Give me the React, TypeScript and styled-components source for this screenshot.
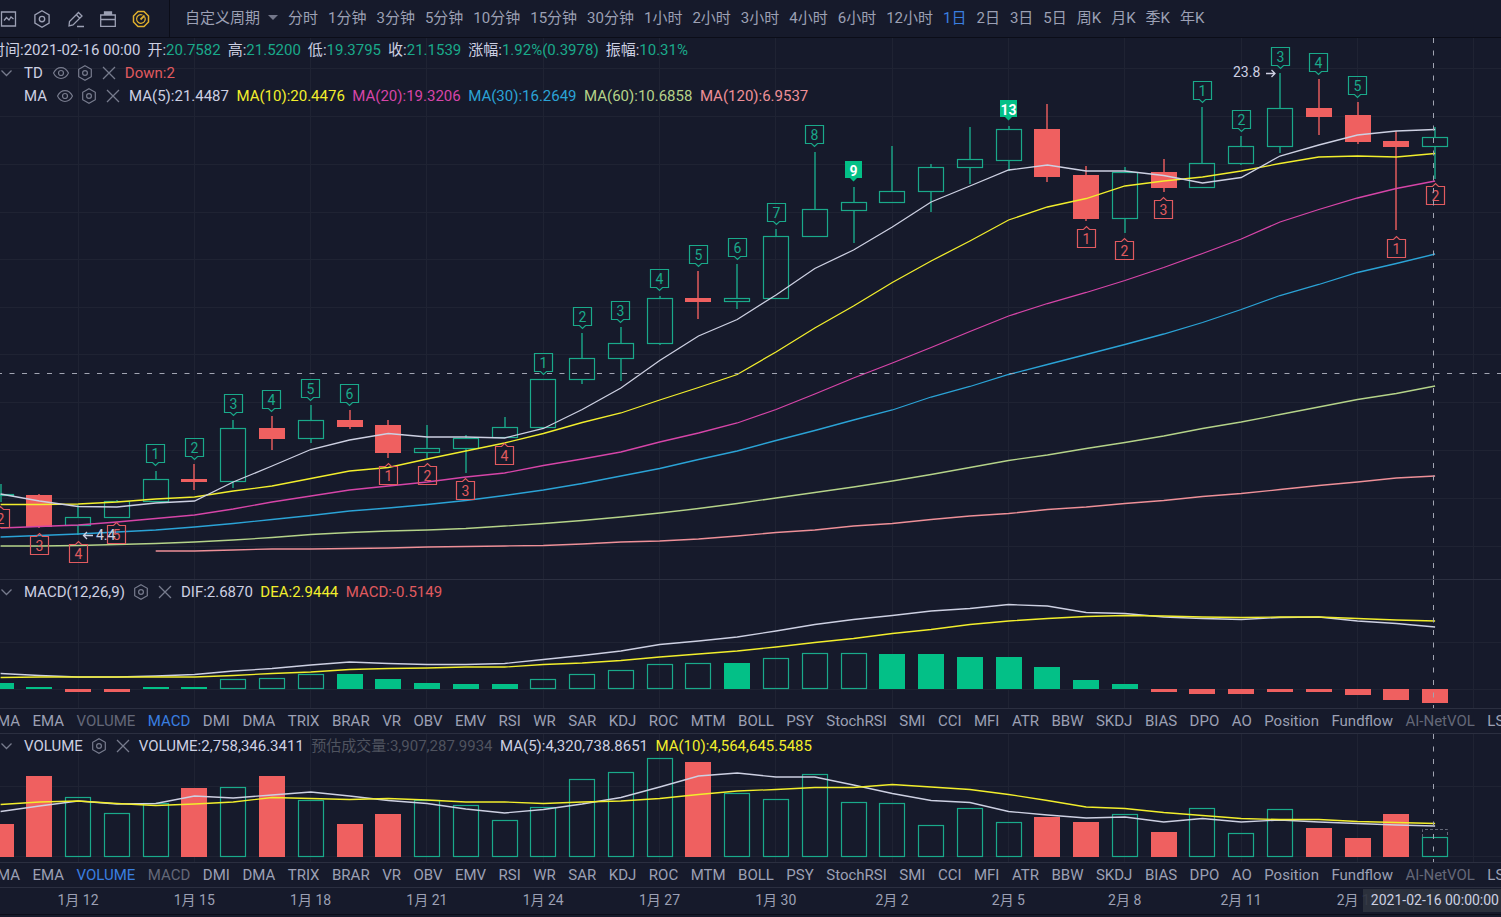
import React, { useState } from "react";
import styled, { createGlobalStyle } from "styled-components";

const color = {
  bg: "#161a2b",
  edge: "#0b0d18",
  line: "#2b2f40",
  grid: "#1f2333",
  text: "#cdd0e2",
  muted: "#9ca0b4",
  dim: "#646878",
  faint: "#4f535f",
  blue: "#3a7fe0",
  up: "#03c087",
  upLine: "#1aa98a",
  down: "#ef6060",
  downText: "#e05a5f",
  yellow: "#f2ee2c",
  magenta: "#d645a8",
  cyan: "#2ba3d6",
  lime: "#b5d389",
  pink: "#ee9098",
};

const font = `Roboto, "Noto Sans CJK SC", sans-serif`;

const GlobalStyle = createGlobalStyle`
  * { box-sizing: border-box; }
  body {
    margin: 0;
    background: ${color.bg};
    color: ${color.text};
    font-family: ${font};
    font-size: 15px;
    overflow-x: hidden;
  }
`;

const Page = styled.div`
  display: flex;
  flex-direction: column;
  min-height: 100vh;
  background: ${color.bg};
`;

const Toolbar = styled.header`
  display: flex;
  align-items: stretch;
  height: 38px;
  overflow: hidden;
  border-bottom: 1px solid ${color.edge};
`;

const ToolGroup = styled.div`
  display: flex;
  flex: none;
  align-items: center;
  gap: 15px;
  width: 170px;
  border-right: 1px solid ${color.edge};
`;

const IconButton = styled.button<{ $tone?: string }>`
  display: flex;
  flex: none;
  padding: 0;
  border: 0;
  background: none;
  cursor: pointer;
  color: ${(p) => p.$tone ?? "#777b8d"};
  svg {
    display: block;
    fill: none;
    stroke: currentColor;
  }
`;

const Periods = styled.nav`
  display: flex;
  align-items: center;
  gap: 10px;
  padding: 0 15px 2px;
`;

const PeriodButton = styled.button<{ $active?: boolean }>`
  padding: 0;
  border: 0;
  background: none;
  font: 15px/20px ${font};
  white-space: nowrap;
  cursor: pointer;
  color: ${(p) => (p.$active ? color.blue : color.muted)};
`;

const SelectWrap = styled.label`
  display: flex;
  align-items: center;
  gap: 8px;
`;

const PeriodSelect = styled.select`
  appearance: none;
  width: 75px;
  padding: 0;
  border: 0;
  outline: 0;
  background: none;
  font: 15px/20px ${font};
  color: ${color.muted};
`;

const Caret = styled.span`
  border: 5px solid transparent;
  border-top-color: #73778a;
  border-bottom: 0;
`;

const Pane = styled.section`
  position: relative;
  border-bottom: 1px solid ${color.line};
  overflow: hidden;
`;

const ChartSvg = styled.svg`
  display: block;
  width: 100%;
  height: auto;
  font-family: ${font};
`;

const Legend = styled.div`
  position: absolute;
  top: 0;
  left: 0;
  white-space: nowrap;
`;

const LegendRow = styled.div`
  display: flex;
  align-items: center;
  gap: 8px;
  height: 23px;
  line-height: 22px;
`;

const QuoteRow = styled(LegendRow)`
  gap: 7px;
  margin-left: -10px;
`;

const Toggle = styled(IconButton)`
  width: 16px;
`;

const ToggleSpace = styled.span`
  width: 16px;
`;

const Name = styled.span<{ $wide?: boolean }>`
  padding-top: 1px;
  padding-right: ${(p) => (p.$wide ? "2px" : "0")};
`;

const Values = styled.div`
  padding-top: 1px;
  white-space: pre;
`;

const Value = styled.span<{ $color?: string }>`
  color: ${(p) => p.$color ?? color.text};
`;

const QuoteItem = styled.span`
  padding-top: 1px;
`;

const Tabs = styled.nav`
  height: 25px;
  margin-left: -3px;
  overflow: hidden;
  border-bottom: 1px solid ${color.line};
  font-size: 14px;
  line-height: 24px;
  white-space: nowrap;
`;

const Tab = styled.button<{ $state?: "active" | "dim" }>`
  margin-right: 9px;
  padding: 0;
  border: 0;
  background: none;
  font: 15px/24px ${font};
  cursor: pointer;
  color: ${(p) =>
    p.$state === "active" ? color.blue : p.$state === "dim" ? color.dim : color.muted};
`;

const Axis = styled.footer`
  position: relative;
  border-bottom: 1px solid ${color.edge};
`;

const CursorTime = styled.time`
  position: absolute;
  top: 1px;
  right: 0;
  padding: 0 2px 0 8px;
  background: rgba(46, 50, 62, 0.92);
  font-size: 14px;
  line-height: 23px;
`;

/* ---------- data, in chart units ---------- */

const W = 1501;
const STEP = 38.77;
const cx = (i: number) => 0.6 + STEP * i;

type Candle = [dir: "u" | "d", high: number, top: number, bottom: number, low: number];

const candles: Candle[] = [
  ["u", 484, 494, 496, 502], ["d", 494, 495, 527, 528], ["u", 505, 517, 526, 535],
  ["u", 500, 501, 518, 518], ["u", 471, 479, 502, 502], ["d", 464, 479, 482, 490],
  ["u", 420, 428, 482, 488], ["d", 416, 428, 439, 450], ["u", 405, 420, 439, 443],
  ["d", 410, 420, 427, 429], ["d", 420, 425, 453, 458], ["u", 425, 448, 453, 458],
  ["u", 435, 438, 449, 473], ["u", 417, 427, 438, 438], ["u", 379, 379, 428, 428],
  ["u", 333, 358, 380, 384], ["u", 327, 343, 359, 381], ["u", 296, 298, 344, 345],
  ["d", 271, 298, 302, 319], ["u", 264, 298, 302, 309], ["u", 229, 236, 299, 299],
  ["u", 152, 209, 237, 237], ["u", 187, 202, 211, 243], ["u", 146, 191, 203, 203],
  ["u", 164, 167, 192, 212], ["u", 127, 159, 168, 184], ["u", 126, 129, 161, 171],
  ["d", 104, 129, 177, 182], ["d", 166, 175, 219, 221], ["u", 167, 172, 219, 233],
  ["d", 159, 172, 188, 192], ["u", 107, 163, 188, 188], ["u", 136, 146, 164, 165],
  ["u", 73, 108, 147, 153], ["d", 79, 108, 117, 135], ["d", 102, 115, 142, 144],
  ["d", 131, 141, 147, 230], ["u", 127, 137, 147, 179],
];

const ma5 = [494, 501, 506.5, 507, 503, 501, 482, 466, 449.5, 440, 433.5, 437, 437, 438, 428.5, 409.5, 388, 360.5, 336, 319.5, 295, 268.5, 250, 227, 202, 186, 170, 165, 171, 171, 175.5, 183, 177.5, 156, 145, 135, 131, 129.5];
const ma10 = [504.5, 504.5, 504, 502, 499, 497, 491, 486, 478.5, 471, 467.5, 459, 451, 443, 433.5, 422.5, 413, 400, 387.5, 374.5, 352, 328, 306, 282.5, 261, 241, 220, 207, 198.5, 186, 181, 177, 171, 163.5, 157, 156, 157, 153.5];
const ma20 = [528, 526.5, 525, 522, 518.5, 515, 509, 502, 496, 490, 486, 482, 477, 473, 465.5, 459, 452, 442, 433, 423, 409.5, 394, 378, 363, 347.5, 331.5, 316, 303.5, 292.5, 280.5, 267.5, 253.5, 239, 222, 209.5, 198, 188.5, 181];
const ma30 = [537, 535.5, 534, 532, 530, 527, 523.5, 519.5, 515.5, 511, 508, 504.5, 500.5, 495.5, 490, 483.5, 476, 468.5, 459.5, 451, 440.5, 430.5, 420, 410, 397, 386.5, 374.5, 364.5, 354.5, 344.5, 334, 322.5, 309.5, 295.5, 284.5, 272.5, 263.5, 254];
const ma60 = [546, 546, 545.5, 544.5, 543.5, 542, 540, 537.5, 534.5, 532.5, 531, 530, 528.5, 526, 523.5, 520.5, 517, 513, 508.5, 503.5, 498, 492.5, 487, 481, 474.5, 467.5, 460.5, 455, 448.5, 442.5, 436, 428.5, 422, 414.5, 407, 399.5, 393.5, 386];
const ma120 = [551, 551, 550, 549, 549, 548.5, 548, 547, 546.5, 546, 545.5, 544, 542, 541, 539, 536, 532.5, 530, 526, 523.5, 519.5, 516, 513.5, 509.5, 507, 503.5, 500.5, 496.5, 493.5, 489.5, 485.5, 482, 478, 476];

type Mark = [index: number, text: string, edge: number, kind: "up" | "down" | "solid"];

/* `edge` is the box's top for up marks and its bottom for down marks */
const marks: Mark[] = [
  [4, "1", 444, "up"], [5, "2", 438, "up"], [6, "3", 394, "up"], [7, "4", 390, "up"],
  [8, "5", 379, "up"], [9, "6", 384, "up"], [14, "1", 353, "up"], [15, "2", 307, "up"],
  [16, "3", 301, "up"], [17, "4", 269, "up"], [18, "5", 245, "up"], [19, "6", 238, "up"],
  [20, "7", 203, "up"], [21, "8", 125, "up"], [22, "9", 161, "solid"], [26, "13", 100, "solid"],
  [31, "1", 81, "up"], [32, "2", 110, "up"], [33, "3", 47, "up"], [34, "4", 53, "up"],
  [35, "5", 76, "up"], [0, "2", 528, "down"], [1, "3", 555, "down"], [2, "4", 563, "down"],
  [3, "5", 544, "down"], [10, "1", 485, "down"], [11, "2", 485, "down"], [12, "3", 500, "down"],
  [13, "4", 465, "down"], [28, "1", 248, "down"], [29, "2", 260, "down"], [30, "3", 219, "down"],
  [36, "1", 258, "down"], [37, "2", 205, "down"],
];

const dif = [673.5, 675.5, 677, 677, 676, 674.5, 671, 668.5, 665, 662, 663.5, 664.5, 664.5, 663.5, 659.5, 655.5, 651, 644.5, 641, 637, 631, 624.5, 619.5, 615.5, 611, 608.5, 604.5, 606, 612.5, 613.5, 617, 618.5, 619.5, 617.5, 617, 621, 623.5, 627];
const dea = [677.5, 677, 677, 677, 677, 677, 675.5, 673.5, 672, 669.5, 668.5, 668, 667, 667, 664.5, 663, 660.5, 657, 654, 651, 647, 642.5, 638.5, 633.5, 629.5, 624.5, 621, 618.5, 616.5, 615.5, 616, 617, 617.5, 617, 617, 618.5, 620, 621];

type Bar = [kind: "solid" | "hollow" | "red", edge: number];

const macdBars: Bar[] = [
  ["solid", 683], ["solid", 687], ["red", 692], ["red", 692], ["solid", 687], ["solid", 687],
  ["hollow", 679], ["hollow", 678], ["hollow", 674], ["solid", 674], ["solid", 679], ["solid", 683],
  ["solid", 684], ["solid", 684], ["hollow", 679], ["hollow", 674], ["hollow", 670], ["hollow", 664],
  ["hollow", 663], ["solid", 663], ["hollow", 658], ["hollow", 653], ["hollow", 653], ["solid", 654],
  ["solid", 654], ["solid", 657], ["solid", 657], ["solid", 667], ["solid", 680], ["solid", 684],
  ["red", 692], ["red", 694], ["red", 694], ["red", 692], ["red", 692], ["red", 695],
  ["red", 700], ["red", 703],
];

const volumeBars: Bar[] = [
  ["red", 824], ["red", 776], ["hollow", 797], ["hollow", 813], ["hollow", 803], ["red", 788],
  ["hollow", 787], ["red", 776], ["hollow", 800], ["red", 824], ["red", 814], ["hollow", 800],
  ["hollow", 805], ["hollow", 820], ["hollow", 807], ["hollow", 779], ["hollow", 772], ["hollow", 758],
  ["red", 762], ["hollow", 793], ["hollow", 799], ["hollow", 774], ["hollow", 802], ["hollow", 803],
  ["hollow", 825], ["hollow", 808], ["hollow", 822], ["red", 817], ["red", 822], ["hollow", 814],
  ["red", 832], ["hollow", 808], ["hollow", 833], ["hollow", 809], ["red", 828], ["red", 838],
  ["red", 814], ["hollow", 837],
];
const vma5 = [811.5, 806, 801, 804, 803.5, 796, 798, 795, 792, 796, 800.5, 803.5, 809, 813, 809.5, 804, 797.5, 787, 776, 773, 777, 777, 785, 793.5, 800.5, 802.5, 811.5, 815, 818, 817, 822, 818.5, 822, 820, 822, 823.5, 825, 826];
const vma10 = [804.5, 802, 801, 803.5, 805.5, 804, 802, 797.5, 798.5, 799.5, 798.5, 800, 802, 802, 803.5, 802, 801, 798.5, 794.5, 791, 789.5, 787.5, 787.5, 784.5, 787, 789.5, 794.5, 800.5, 807, 808.5, 812.5, 815.5, 818.5, 819.5, 819.5, 821.5, 822.5, 823.5];

const gridX = Array.from({ length: 13 }, (_, k) => Math.round(77.5 + 116.3 * k) + 0.5);

/* ---------- drawing parts ---------- */

function Line({ values, stroke, from = 0 }: { values: number[]; stroke: string; from?: number }) {
  const pts = values.map((y, k) => `${cx(from + k).toFixed(1)},${y}`).join(" ");
  return <polyline points={pts} fill="none" stroke={stroke} strokeWidth="1.3" />;
}

function Grid({ rows, top, bottom }: { rows: number[]; top: number; bottom: number }) {
  return (
    <g stroke={color.grid}>
      {gridX.map((x) => <line key={x} x1={x} x2={x} y1={top} y2={bottom} />)}
      {rows.map((y) => <line key={y} x1="0" x2={W} y1={y} y2={y} />)}
    </g>
  );
}

function CursorLine({ top, bottom }: { top: number; bottom: number }) {
  return <line x1="1433.5" x2="1433.5" y1={top} y2={bottom} stroke="#a1a4b2" strokeDasharray="5 7.5" />;
}

function Body({ i, top, bottom, kind }: { i: number; top: number; bottom: number; kind: Bar[0] }) {
  const x = Math.round(cx(i) - 13);
  if (kind === "hollow") {
    return (
      <rect x={x + 0.5} y={top + 0.5} width="25" height={Math.max(bottom - top - 1, 1)} fill="none" stroke={color.upLine} strokeWidth="1.2" />
    );
  }
  return <rect x={x} y={top} width="26" height={bottom - top} fill={kind === "red" ? color.down : color.up} />;
}

function CandleMark({ i, c }: { i: number; c: Candle }) {
  const [dir, high, top, bottom, low] = c;
  const x = Math.round(cx(i) - 13) + 13;
  const stroke = dir === "u" ? color.upLine : color.down;
  return (
    <g>
      <path d={`M${x} ${high}V${top}M${x} ${bottom}V${low}`} stroke={stroke} strokeWidth="1.4" />
      <Body i={i} top={top} bottom={bottom} kind={dir === "u" ? "hollow" : "red"} />
    </g>
  );
}

function TdMark({ m: [i, text, edge, kind] }: { m: Mark }) {
  const x = Math.floor(cx(i)) - 9 + 0.5;
  const down = kind === "down";
  const y = (down ? edge - 19 : edge) + 0.5;
  const d = down
    ? `M${x} ${y}h6l3 -3l3 3h6v18h-18z`
    : `M${x} ${y}h18v18h-6l-3 3l-3 -3h-6z`;
  const tone = down ? color.downText : color.upLine;
  const solid = kind === "solid";
  return (
    <g>
      {solid
        ? <path d={`M${x + 0.5} ${y - 0.5}h17v17h-5l-3.5 3.5l-3.5 -3.5h-5z`} fill={color.up} />
        : <path d={d} fill="none" stroke={tone} strokeWidth="1.2" />}
      <text x={x + 9} y={y + 14} fontSize="14" fontWeight={solid ? 700 : 400} textAnchor="middle" fill={solid ? "#fff" : tone}>
        {text}
      </text>
    </g>
  );
}

function MainChart() {
  return (
    <ChartSvg viewBox={`0 38 ${W} 541`} role="img" aria-label="K线图">
      <Grid rows={[68.5, 116.5, 164.5, 212.5, 259.5, 307.5, 354.5, 402.5, 450.5, 498.5, 546.5]} top={38} bottom={579} />
      {candles.map((c, i) => <CandleMark key={i} i={i} c={c} />)}
      <Line values={ma120} stroke={color.pink} from={4} />
      <Line values={ma60} stroke={color.lime} />
      <Line values={ma30} stroke={color.cyan} />
      <Line values={ma20} stroke={color.magenta} />
      <Line values={ma10} stroke={color.yellow} />
      <Line values={ma5} stroke={color.text} />
      {marks.map((m) => <TdMark key={`${m[0]}${m[3]}`} m={m} />)}
      <g fill={color.text} fontSize="14">
        <text x="96" y="540">4.4</text>
        <text x="1233" y="77">23.8</text>
      </g>
      <path d="M93 535.5H83.5M87 532l-3.5 3.5l3.5 3.5M1266 73.5h9M1271.5 70l3.5 3.5l-3.5 3.5" fill="none" stroke={color.text} strokeWidth="1.3" />
      <line x1="-3" x2={W} y1="373.5" y2="373.5" stroke="#a1a4b2" strokeDasharray="5 7.5" />
      <CursorLine top={38} bottom={579} />
    </ChartSvg>
  );
}

function MacdChart() {
  return (
    <ChartSvg viewBox={`0 580 ${W} 128`} role="img" aria-label="MACD">
      <Grid rows={[642.5, 689.5]} top={580} bottom={708} />
      {macdBars.map(([kind, edge], i) => (
        <Body key={i} i={i} kind={kind} top={Math.min(edge, 689)} bottom={Math.max(edge, 689)} />
      ))}
      <Line values={dif} stroke={color.text} />
      <Line values={dea} stroke={color.yellow} />
      <CursorLine top={580} bottom={708} />
    </ChartSvg>
  );
}

function VolumeChart() {
  return (
    <ChartSvg viewBox={`0 734 ${W} 128`} role="img" aria-label="VOLUME">
      <Grid rows={[786.5, 856.5]} top={734} bottom={862} />
      {volumeBars.map(([kind, edge], i) => (
        <Body key={i} i={i} kind={kind} top={edge} bottom={857} />
      ))}
      <path d="M1422.5 837v-7.5h25v7.5" fill="none" stroke={color.dim} strokeDasharray="3 2" />
      <Line values={vma5} stroke={color.text} />
      <Line values={vma10} stroke={color.yellow} />
      <CursorLine top={734} bottom={862} />
    </ChartSvg>
  );
}

/* ---------- icons ---------- */

const HexIcon = ({ size = 16 }: { size?: number }) => (
  <svg width={size} height={size} viewBox="0 0 16 16" strokeWidth="1.2">
    <path d="M8 .7l6.3 3.6v7.4L8 15.3l-6.3 -3.6V4.3z" />
    <circle cx="8" cy="8" r="2.4" />
  </svg>
);
const EyeIcon = () => (
  <svg width="16" height="16" viewBox="0 0 16 16" strokeWidth="1.2">
    <path d="M.5 8C4 .7 12 .7 15.5 8C12 15.3 4 15.3 .5 8z" />
    <circle cx="8" cy="8" r="2.5" />
  </svg>
);
const CloseIcon = () => (
  <svg width="16" height="16" viewBox="0 0 16 16" strokeWidth="1.3">
    <path d="M2 2l12 12M14 2L2 14" />
  </svg>
);
const ChevronIcon = () => (
  <svg width="16" height="16" viewBox="0 0 16 16" strokeWidth="1.3">
    <path d="M1.5 5.5l5 5l5 -5" />
  </svg>
);
const ChartIcon = () => (
  <svg width="18" height="18" viewBox="0 0 18 18" strokeWidth="1.3">
    <path d="M1.5 2h14v14h-14zM4 10.5l2.5 -3l2.5 2.5l2 -3l2.5 2" />
  </svg>
);
const PencilIcon = () => (
  <svg width="18" height="18" viewBox="0 0 18 18" strokeWidth="1.3">
    <path d="M3 16l.5 -4.5L12.5 2.5l3.5 3.5L7 15zM10.3 4.8l3.5 3.5M11 16.5h7" />
  </svg>
);
const CaseIcon = () => (
  <svg width="18" height="18" viewBox="0 0 18 18" strokeWidth="1.3">
    <path d="M1.7 5h14.6v11.3H1.7zM1.7 9.5h14.6M5.5 5V2h7v3M5.5 3.5h7" />
  </svg>
);
const GaugeIcon = () => (
  <svg width="18" height="18" viewBox="0 0 18 18" strokeWidth="1.5">
    <path d="M6 1.5h6L16.5 6v6L12 16.5H6L1.5 12V6z" />
    <path d="M12.6 6.8a4.3 4.3 0 1 1 -2.1 -1.8" strokeWidth="1.2" />
    <path d="M8.5 9.5l4 -4" strokeWidth="1.8" />
  </svg>
);

/* ---------- page ---------- */

const periods = ["分时", "1分钟", "3分钟", "5分钟", "10分钟", "15分钟", "30分钟", "1小时", "2小时", "3小时", "4小时", "6小时", "12小时", "1日", "2日", "3日", "5日", "周K", "月K", "季K", "年K"];

const indicators = ["MA", "EMA", "VOLUME", "MACD", "DMI", "DMA", "TRIX", "BRAR", "VR", "OBV", "EMV", "RSI", "WR", "SAR", "KDJ", "ROC", "MTM", "BOLL", "PSY", "StochRSI", "SMI", "CCI", "MFI", "ATR", "BBW", "SKDJ", "BIAS", "DPO", "AO", "Position", "Fundflow", "AI-NetVOL", "LSUR"];

const dates = ["1月 12", "1月 15", "1月 18", "1月 21", "1月 24", "1月 27", "1月 30", "2月 2", "2月 5", "2月 8", "2月 11", "2月 14"];

const quote = [["开", "20.7582"], ["高", "21.5200"], ["低", "19.3795"], ["收", "21.1539"], ["涨幅", "1.92%(0.3978)"], ["振幅", "10.31%"]];

type Reading = [text: string, tone?: string];

const maReadings: Reading[] = [
  ["MA(5):21.4487"], ["MA(10):20.4476", color.yellow], ["MA(20):19.3206", color.magenta],
  ["MA(30):16.2649", color.cyan], ["MA(60):10.6858", color.lime], ["MA(120):6.9537", color.pink],
];
const macdReadings: Reading[] = [["DIF:2.6870"], ["DEA:2.9444", color.yellow], ["MACD:-0.5149", color.downText]];
const volumeReadings: Reading[] = [
  ["VOLUME:2,758,346.3411"], ["预估成交量:3,907,287.9934", color.faint],
  ["MA(5):4,320,738.8651"], ["MA(10):4,564,645.5485", color.yellow],
];

function Readings({ items }: { items: Reading[] }) {
  return (
    <Values>
      {items.map(([text, tone], k) => (
        <React.Fragment key={text}>
          {k > 0 && "  "}
          <Value $color={tone}>{text}</Value>
        </React.Fragment>
      ))}
    </Values>
  );
}

function IndicatorTabs({ active, dim }: { active: string; dim: string }) {
  return (
    <Tabs>
      {indicators.map((name) => (
        <React.Fragment key={name}>
          <Tab $state={name === active ? "active" : name === dim || name === "AI-NetVOL" ? "dim" : undefined}>
            {name}
          </Tab>{" "}
        </React.Fragment>
      ))}
    </Tabs>
  );
}

function Controls({ eye }: { eye?: boolean }) {
  return (
    <>
      {eye && <Toggle aria-label="显示"><EyeIcon /></Toggle>}
      <Toggle aria-label="设置"><HexIcon /></Toggle>
      <Toggle aria-label="关闭"><CloseIcon /></Toggle>
    </>
  );
}

export default function App() {
  const [period, setPeriod] = useState("1日");
  return (
    <Page>
      <GlobalStyle />
      <Toolbar>
        <ToolGroup>
          <IconButton $tone={color.muted} aria-label="指标"><ChartIcon /></IconButton>
          <IconButton $tone={color.muted} aria-label="设置"><HexIcon size={18} /></IconButton>
          <IconButton $tone={color.muted} aria-label="画线"><PencilIcon /></IconButton>
          <IconButton $tone={color.muted} aria-label="工具箱"><CaseIcon /></IconButton>
          <IconButton $tone="#e0b02e" aria-label="信号"><GaugeIcon /></IconButton>
        </ToolGroup>
        <Periods>
          <SelectWrap>
            <PeriodSelect aria-label="自定义周期">
              <option>自定义周期</option>
            </PeriodSelect>
            <Caret />
          </SelectWrap>
          {periods.map((p) => (
            <PeriodButton key={p} $active={p === period} onClick={() => setPeriod(p)}>{p}</PeriodButton>
          ))}
        </Periods>
      </Toolbar>

      <Pane>
        <MainChart />
        <Legend>
          <QuoteRow>
            <QuoteItem>时间:2021-02-16 00:00</QuoteItem>
            {quote.map(([label, value]) => (
              <QuoteItem key={label}>{label}:<Value $color={color.upLine}>{value}</Value></QuoteItem>
            ))}
          </QuoteRow>
          <LegendRow>
            <Toggle aria-label="收起"><ChevronIcon /></Toggle>
            <Name $wide>TD</Name>
            <Controls eye />
            <Readings items={[["Down:2", color.downText]]} />
          </LegendRow>
          <LegendRow>
            <ToggleSpace />
            <Name $wide>MA</Name>
            <Controls eye />
            <Readings items={maReadings} />
          </LegendRow>
        </Legend>
      </Pane>

      <Pane>
        <MacdChart />
        <Legend>
          <LegendRow>
            <Toggle aria-label="收起"><ChevronIcon /></Toggle>
            <Name>MACD(12,26,9)</Name>
            <Controls />
            <Readings items={macdReadings} />
          </LegendRow>
        </Legend>
      </Pane>
      <IndicatorTabs active="MACD" dim="VOLUME" />

      <Pane>
        <VolumeChart />
        <Legend>
          <LegendRow>
            <Toggle aria-label="收起"><ChevronIcon /></Toggle>
            <Name>VOLUME</Name>
            <Controls />
            <Readings items={volumeReadings} />
          </LegendRow>
        </Legend>
      </Pane>
      <IndicatorTabs active="VOLUME" dim="MACD" />

      <Axis>
        <ChartSvg viewBox={`0 0 ${W} 26`} role="img" aria-label="日期">
          {dates.map((d, k) => (
            <text key={d} x={78 + 116.3 * k} y="17" fontSize="14" textAnchor="middle" fill={color.muted}>{d}</text>
          ))}
        </ChartSvg>
        <CursorTime dateTime="2021-02-16T00:00:00">2021-02-16 00:00:00</CursorTime>
      </Axis>
    </Page>
  );
}
